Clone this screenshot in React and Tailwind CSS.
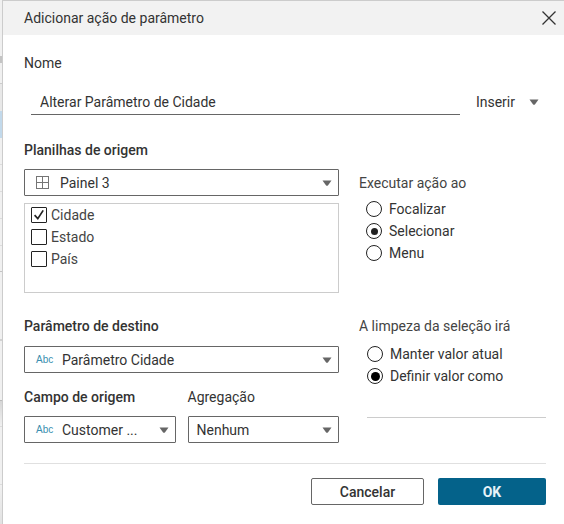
import React from "react";

function Caret({ className = "" }) {
  return (
    <svg className={className} width="10" height="6" viewBox="0 0 10 6" aria-hidden="true">
      <path d="M0.5 0.4h9L5.9 5.5Q5 6.2 4.1 5.5Z" fill="#666" />
    </svg>
  );
}

function GridIcon() {
  return (
    <svg width="13" height="13" viewBox="0 0 13 13" fill="none" stroke="#757575" aria-hidden="true">
      <path d="M0 0.5h13M0 6.5h13M0 12.5h13M0.5 0v13M6.5 0v13M12.5 0v13" />
    </svg>
  );
}

function Abc() {
  return (
    <span className="font-['Liberation_Sans',sans-serif] text-[10px] leading-none font-normal text-[#3a8fb0]">
      Abc
    </span>
  );
}

function Select({ id, value, icon, padding = "pl-2" }) {
  return (
    <div className="relative">
      <select
        id={id}
        defaultValue={value}
        className={`block h-[27px] w-full appearance-none rounded-[1px] border border-[#666] bg-white pr-6 text-[#333] outline-none ${padding}`}
      >
        <option>{value}</option>
      </select>
      {icon && (
        <span className="pointer-events-none absolute inset-y-0 left-3 flex items-center">{icon}</span>
      )}
      <Caret className="pointer-events-none absolute top-[11px] right-[7px]" />
    </div>
  );
}

function Check({ label, checked }) {
  return (
    <label className="flex h-[22px] items-center gap-1 text-[#444]">
      <span className="relative flex size-4">
        <input
          type="checkbox"
          defaultChecked={checked}
          className="peer size-4 appearance-none rounded-[1px] border border-[#222] bg-white"
        />
        <svg
          className="pointer-events-none absolute inset-0 hidden peer-checked:block"
          width="16"
          height="16"
          viewBox="0 0 16 16"
          fill="none"
          stroke="#222"
          strokeWidth="1.7"
          aria-hidden="true"
        >
          <path d="M3.6 8.2l3.2 3.4L12.2 3.4" />
        </svg>
      </span>
      {label}
    </label>
  );
}

function Radio({ name, label, checked, dot = "before:size-[7px] before:bg-[#222]" }) {
  return (
    <label className="flex h-[22px] items-center gap-[7px]">
      <input
        type="radio"
        name={name}
        defaultChecked={checked}
        className={`flex size-4 appearance-none items-center justify-center rounded-full border border-[#222] bg-white before:hidden before:rounded-full checked:before:block ${dot}`}
      />
      {label}
    </label>
  );
}

function Backdrop() {
  return (
    <div className="flex w-[2px] shrink-0 flex-col bg-[#f0f0f0]" aria-hidden="true">
      <div className="h-14" />
      <div className="h-[7px] bg-[#c4c4c4]" />
      <div className="h-5" />
      <div className="h-7 border-t border-[#ccc] bg-[#e8e8e8]" />
      <div className="h-[27px] bg-[#c2d9eb]" />
      <div className="h-[26px]" />
      <div className="h-[27px] border-t border-[#dcdcdc]" />
      <div className="h-[27px] border-t border-[#dcdcdc]" />
      <div className="h-[27px] border-t border-[#dcdcdc]" />
      <div className="h-[26px] border-t border-[#dcdcdc]" />
      <div className="h-[68px] border-t border-[#c4c4c4]" />
      <div className="h-[61px] border-t-2 border-[#d2d2d2]" />
      <div className="h-[26px] border-t border-[#bbb] bg-linear-to-b from-[#d6d6d6] to-[#f0f0f0]" />
      <div className="h-[58px] border-t border-[#dcdcdc]" />
      <div className="flex-1 border-t border-[#dcdcdc] bg-linear-to-b from-[#f0f0f0] to-[#e2e2e2]" />
    </div>
  );
}

export default function App() {
  return (
    <div className="flex min-h-screen bg-white font-['Roboto',sans-serif] text-[14px] leading-5 text-[#333]">
      <Backdrop />
      <main className="min-w-0 flex-1 border-t border-l border-[#ccc]" role="dialog" aria-labelledby="title">
        <header className="flex h-[34px] items-center justify-between bg-[#f2f2f2] pr-2 pl-[21px]">
          <h1 id="title">Adicionar ação de parâmetro</h1>
          <button type="button" aria-label="Fechar">
            <svg width="14" height="14" viewBox="0 0 14 14" fill="none" stroke="#333" strokeWidth="1.3" aria-hidden="true">
              <path d="M0.5 0.5l13 13M13.5 0.5l-13 13" />
            </svg>
          </button>
        </header>

        <form className="pt-[18px] pr-[18px] pl-[21px]">
          <label htmlFor="name" className="block">Nome</label>
          <div className="mt-4 flex items-center pl-[7px]">
            <input
              id="name"
              type="text"
              defaultValue="Alterar Parâmetro de Cidade"
              className="h-[26px] min-w-0 flex-1 border-b border-[#666] pl-[9px] outline-none"
            />
            <button type="button" className="ml-4 flex items-center gap-[14px] pr-[7px]">
              Inserir
              <Caret />
            </button>
          </div>

          <label htmlFor="sheets" className="mt-[25px] block font-medium">Planilhas de origem</label>
          <div className="mt-[9px] flex gap-5">
            <div className="min-w-0 flex-1">
              <Select id="sheets" value="Painel 3" icon={<GridIcon />} padding="pl-[35px]" />
              <div className="mt-[7px] h-[90px] border border-[#ccc] pl-[6px]">
                <Check label="Cidade" checked />
                <Check label="Estado" />
                <Check label="País" />
              </div>
            </div>
            <fieldset className="w-[187px]">
              <legend className="pt-1 text-[#444]">Executar ação ao</legend>
              <div className="mt-[5px] pl-[7px]">
                <Radio name="run" label="Focalizar" />
                <Radio name="run" label="Selecionar" checked />
                <Radio name="run" label="Menu" />
              </div>
            </fieldset>
          </div>

          <div className="mt-[23px] flex gap-5">
            <div className="min-w-0 flex-1">
              <label htmlFor="target" className="block font-medium">Parâmetro de destino</label>
              <div className="mt-[10px]">
                <Select id="target" value="Parâmetro Cidade" icon={<Abc />} padding="pl-[37px]" />
              </div>
              <div className="mt-[14px] grid grid-cols-2 gap-3">
                <div>
                  <label htmlFor="field" className="block font-medium">Campo de origem</label>
                  <div className="mt-[9px]">
                    <Select id="field" value="Customer ..." icon={<Abc />} padding="pl-[37px]" />
                  </div>
                </div>
                <div>
                  <label htmlFor="agg" className="block">Agregação</label>
                  <div className="mt-[9px]">
                    <Select id="agg" value="Nenhum" />
                  </div>
                </div>
              </div>
            </div>
            <fieldset className="w-[187px]">
              <legend className="text-[#444]">A limpeza da seleção irá</legend>
              <div className="mt-[7px] pl-2">
                <Radio name="clear" label="Manter valor atual" />
                <Radio name="clear" label="Definir valor como" checked dot="before:size-[9px] before:bg-black" />
                <input
                  type="text"
                  aria-label="Definir valor como"
                  className="mt-[5px] block h-[26px] w-full border-b border-[#ccc] outline-none"
                />
              </div>
            </fieldset>
          </div>

          <footer className="mt-5 flex justify-end gap-[14px] border-t border-[#e0e0e0] pt-[14px] font-medium">
            <button type="button" className="h-[27px] w-[113px] rounded-[2px] border border-[#666]">Cancelar</button>
            <button type="submit" className="h-[27px] w-[108px] rounded-[2px] bg-[#04628a] font-bold text-[#e6f2f8]">OK</button>
          </footer>
        </form>
      </main>
    </div>
  );
}
